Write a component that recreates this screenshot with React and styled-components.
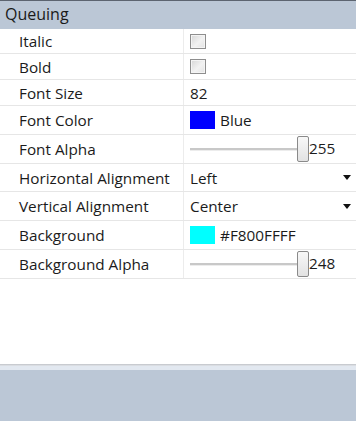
import React from "react";
import styled, { createGlobalStyle } from "styled-components";

const GlobalStyle = createGlobalStyle`
  html, body, #root { margin: 0; padding: 0; height: 100%; }
  body {
    font-family: "Open Sans", "Noto Sans", "Liberation Sans", sans-serif;
    font-size: 15.3px;
    color: #1b1b1b;
    background: #fff;
  }
`;

const rows = [
  { label: "Italic", type: "check", h: 25 },
  { label: "Bold", type: "check", h: 26 },
  { label: "Font Size", type: "text", value: "82", h: 26 },
  { label: "Font Color", type: "color", color: "#0000ff", value: "Blue", h: 29 },
  { label: "Font Alpha", type: "slider", value: 255, h: 29 },
  { label: "Horizontal Alignment", type: "select", value: "Left", h: 28 },
  { label: "Vertical Alignment", type: "select", value: "Center", h: 29 },
  { label: "Background", type: "color", color: "#00ffff", value: "#F800FFFF", h: 29 },
  { label: "Background Alpha", type: "slider", value: 248, h: 29 },
];

const App = () => {
  return (
    <>
      <GlobalStyle />
      <Panel>
        <Header>Queuing</Header>
        <Grid>
          {rows.map((r) => (
            <Row key={r.label} $h={r.h}>
              <Label>{r.label}</Label>
              <Value>
                {r.type === "check" && <CheckBox />}
                {r.type === "text" && <span>{r.value}</span>}
                {r.type === "color" && (
                  <>
                    <Swatch $color={r.color} />
                    <span>{r.value}</span>
                  </>
                )}
                {r.type === "slider" && (
                  <>
                    <Slider>
                      <Track />
                      <Thumb />
                    </Slider>
                    <SliderValue>{r.value}</SliderValue>
                  </>
                )}
                {r.type === "select" && (
                  <>
                    <SelectText>{r.value}</SelectText>
                    <Arrow />
                  </>
                )}
              </Value>
            </Row>
          ))}
        </Grid>
        <Spacer />
        <Footer />
      </Panel>
    </>
  );
};

export default App;

const Panel = styled.div`
  height: 421px;
  display: flex;
  flex-direction: column;
  background: #fff;
`;

const Header = styled.div`
  height: 29px;
  box-sizing: border-box;
  border-top: 1px solid #5c6470;
  background: #bbc7d6;
  padding: 0 0 2px 5px;
  display: flex;
  align-items: center;
  font-size: 16px;
  color: #1a1a1a;
`;

const Grid = styled.div`
  display: flex;
  flex-direction: column;
`;

const Row = styled.div`
  display: grid;
  grid-template-columns: 184px 1fr;
  height: ${(p) => p.$h}px;
  box-sizing: border-box;
  border-bottom: 1px solid #e6e6e6;
`;

const Label = styled.div`
  padding-left: 19px;
  display: flex;
  align-items: center;
  border-right: 1px solid #ececec;
  white-space: nowrap;
`;

const Value = styled.div`
  padding-left: 6px;
  padding-right: 5px;
  display: flex;
  align-items: center;
  gap: 5px;
`;

const CheckBox = styled.div`
  width: 16px;
  height: 15px;
  box-sizing: border-box;
  border: 1px solid #8e8e8e;
  background: linear-gradient(135deg, #d6d6d6 0%, #f2f2f2 55%, #e2e2e2 100%);
  box-shadow: inset 0 0 0 1px #f4f4f4;
`;

const Swatch = styled.div`
  width: 25px;
  height: 18px;
  background: ${(p) => p.$color};
`;

const Slider = styled.div`
  position: relative;
  width: 119px;
  height: 28px;
  display: flex;
  align-items: center;
`;

const Track = styled.div`
  width: 100%;
  height: 2px;
  background: #c8c8c8;
  border-bottom: 1px solid #ececec;
`;

const Thumb = styled.div`
  position: absolute;
  right: 0;
  top: 1px;
  width: 12px;
  height: 26px;
  box-sizing: border-box;
  border: 1px solid #8a8a8a;
  border-radius: 2px;
  background: linear-gradient(180deg, #f8f8f8 0%, #e2e2e2 100%);
`;

const SliderValue = styled.span`
  margin-left: -5px;
  margin-top: -3px;
`;

const SelectText = styled.span`
  flex: 1;
`;

const Arrow = styled.div`
  width: 0;
  height: 0;
  border-left: 4px solid transparent;
  border-right: 4px solid transparent;
  border-top: 5px solid #111;
`;

const Spacer = styled.div`
  flex: 1;
`;

const Footer = styled.div`
  height: 57px;
  box-sizing: border-box;
  border-top: 1px solid #c8cbd0;
  box-shadow: inset 0 1px 0 #dadde2, inset 0 5px 0 #e2e8f0;
  background: #bbc7d6;
`;
